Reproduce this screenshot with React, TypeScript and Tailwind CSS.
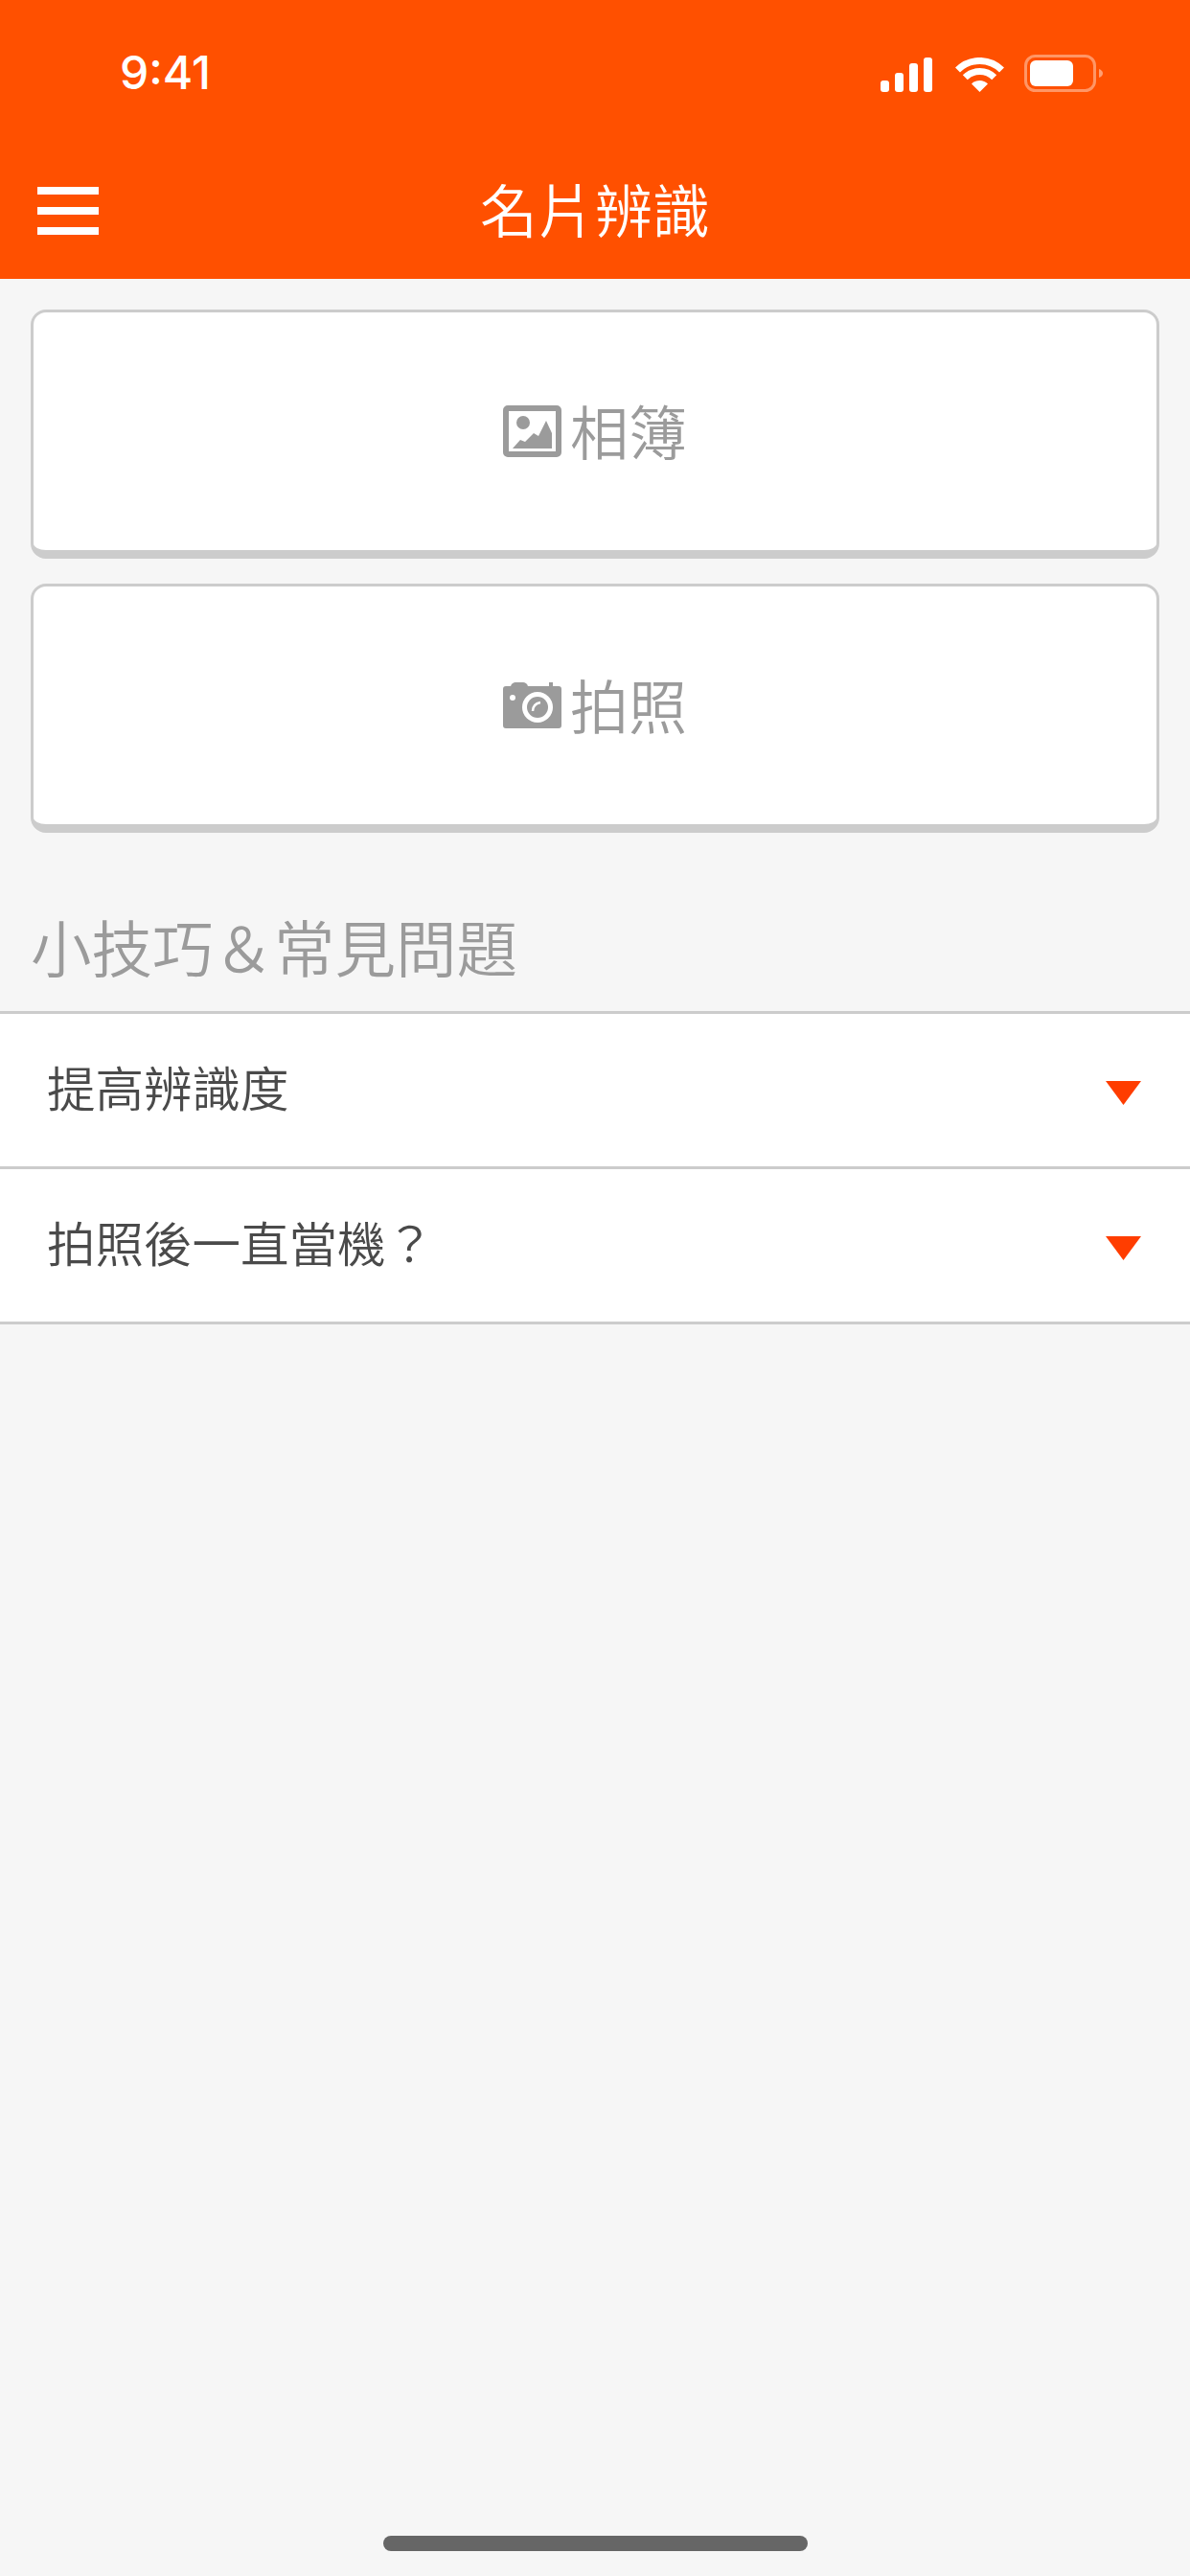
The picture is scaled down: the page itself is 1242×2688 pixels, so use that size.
import { ReactNode } from "react";

const faqItems = ["提高辨識度", "拍照後一直當機？"];

function SignalIcon() {
  return (
    <svg width="54" height="36" viewBox="0 0 54 36" fill="#fff">
      <rect x="0" y="24" width="9" height="12" rx="3" />
      <rect x="15" y="16" width="9" height="20" rx="3" />
      <rect x="30" y="6" width="9" height="30" rx="3" />
      <rect x="45" y="0" width="9" height="36" rx="3" />
    </svg>
  );
}

function WifiIcon() {
  return (
    <svg width="51" height="36" viewBox="0 0 51 36" fill="none" stroke="#fff" strokeWidth="7">
      <path d="M2.5 13 A32.5 32.5 0 0 1 48.5 13" />
      <path d="M10.3 20.8 A21.5 21.5 0 0 1 40.7 20.8" />
      <path d="M25.5 36 L17 27.5 A12 12 0 0 1 34 27.5 Z" fill="#fff" stroke="none" />
    </svg>
  );
}

function BatteryIcon() {
  return (
    <svg width="82" height="39" viewBox="0 0 82 39" fill="none">
      <rect x="1.5" y="1.5" width="72" height="36" rx="10" stroke="#fff" strokeOpacity="0.4" strokeWidth="3" />
      <rect x="6" y="6" width="45" height="27" rx="6" fill="#fff" />
      <path d="M78 15 C80.5 16 82 17.5 82 19.5 C82 21.5 80.5 23 78 24 Z" fill="#fff" fillOpacity="0.45" />
    </svg>
  );
}

function PictureIcon() {
  return (
    <svg width="61" height="54" viewBox="0 0 61 54" className="shrink-0">
      <rect x="3" y="3" width="55" height="48" rx="2" fill="none" stroke="#9b9b9b" strokeWidth="6" />
      <circle cx="21" cy="18" r="7" fill="#9b9b9b" />
      <path d="M10 45 L18 36 L23 38 L32 29 L37 32 L45 16 L51 29 L51 45 Z" fill="#9b9b9b" />
    </svg>
  );
}

function CameraIcon() {
  return (
    <svg width="61" height="48" viewBox="0 0 61 48" className="shrink-0">
      <path
        d="M3 4 H8 C9 1 11 0 13 0 H21 C23 0 25 1 26 4 H48 V0 H52 V4 H58 C60 4 61 5 61 7 V45 C61 47 60 48 58 48 H3 C1 48 0 47 0 45 V7 C0 5 1 4 3 4 Z"
        fill="#9b9b9b"
      />
      <circle cx="10" cy="16" r="3" fill="#fff" />
      <circle cx="36" cy="26" r="16" fill="#fff" />
      <circle cx="36" cy="26" r="11" fill="#9b9b9b" />
      <path d="M31 30 C31 25 34 22 39 21" fill="none" stroke="#fff" strokeWidth="2.5" />
    </svg>
  );
}

function Caret() {
  return (
    <svg width="37" height="25" viewBox="0 0 37 25" className="mt-[6px] shrink-0">
      <path d="M0 0 H37 L18.5 25 Z" fill="#ff3d00" />
    </svg>
  );
}

function ActionButton({ icon, label }: { icon: ReactNode; label: string }) {
  return (
    <button
      type="button"
      className="flex h-[260px] w-full items-center justify-center gap-[9px] rounded-[16px] border-[3px] border-b-[9px] border-[#cccccc] bg-white text-[61px] font-[350] leading-none text-[#9b9b9b]"
    >
      {icon}
      <span className="mb-[3px]">{label}</span>
    </button>
  );
}

export default function App() {
  return (
    <div
      className="flex min-h-[2688px] flex-col bg-[#f6f6f6]"
      style={{ fontFamily: '"Noto Sans CJK TC", "Noto Sans", sans-serif' }}
    >
      <header className="flex h-[291px] flex-col bg-[#ff5000] text-white">
        <div className="flex h-[150px] items-start justify-between pl-[125px] pr-[91px] pt-[47px]">
          <span className="text-[48px] font-medium leading-[58px] font-['Inter']">9:41</span>
          <div className="flex items-start pt-[13px]">
            <SignalIcon />
            <div className="ml-[24px]">
              <WifiIcon />
            </div>
            <div className="-mt-[3px] ml-[21px]">
              <BatteryIcon />
            </div>
          </div>
        </div>
        <div className="grid flex-1 grid-cols-[1fr_auto_1fr] items-center px-[39px] pb-[2px]">
          <div className="flex w-[64px] flex-col gap-[13px]">
            <span className="h-[8px] bg-white" />
            <span className="h-[8px] bg-white" />
            <span className="h-[8px] bg-white" />
          </div>
          <h1 className="mb-[6px] text-[60px] font-[350] leading-none">名片辨識</h1>
          <div />
        </div>
      </header>

      <main className="flex flex-1 flex-col">
        <div className="flex flex-col gap-[26px] px-[32px] pt-[32px]">
          <ActionButton icon={<PictureIcon />} label="相簿" />
          <ActionButton icon={<CameraIcon />} label="拍照" />
        </div>

        <h2 className="px-[32px] pb-[30px] pt-[79px] text-[63.5px] font-[350] leading-[77px] text-[#9b9b9b]">
          小技巧＆常見問題
        </h2>

        <ul className="border-t-[3px] border-[#cccccc] bg-white">
          {faqItems.map((item) => (
            <li
              key={item}
              className="flex h-[162px] items-center justify-between border-b-[3px] border-[#cccccc] pl-[49px] pr-[51px] text-[50.5px] font-[350] leading-none text-[#4a4a4a]"
            >
              <span className="mb-[9px]">{item}</span>
              <Caret />
            </li>
          ))}
        </ul>

        <div className="mt-auto flex justify-center pb-[26px]">
          <span className="h-[16px] w-[443px] rounded-full bg-[#666666]" />
        </div>
      </main>
    </div>
  );
}
